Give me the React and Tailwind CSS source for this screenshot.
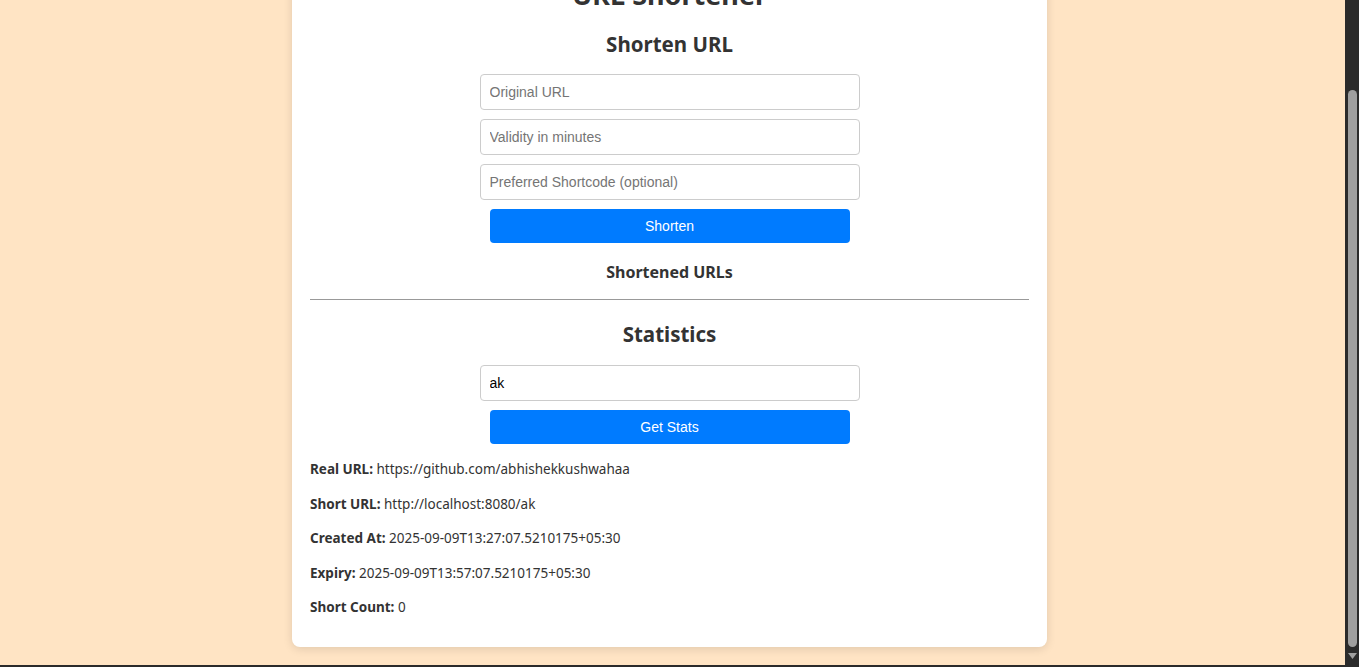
import { useState } from "react";

const stats = [
  { label: "Real URL:", value: "https://github.com/abhishekkushwahaa" },
  { label: "Short URL:", value: "http://localhost:8080/ak" },
  { label: "Created At:", value: "2025-09-09T13:27:07.5210175+05:30" },
  { label: "Expiry:", value: "2025-09-09T13:57:07.5210175+05:30" },
  { label: "Short Count:", value: "0" },
];

const inputCls =
  "w-[380px] h-[36px] px-[9px] border border-[#cccccc] rounded-[4px] bg-white text-[14px] text-black placeholder:text-[#757575] outline-none font-['Liberation_Sans',Arial,sans-serif]";

const btnCls =
  "w-[360px] h-[34px] rounded-[4px] bg-[#007bff] text-white text-[14px] font-['Liberation_Sans',Arial,sans-serif]";

export default function App() {
  const [form, setForm] = useState({ url: "", validity: "", code: "" });
  const [code, setCode] = useState("ak");

  return (
    <div className="h-[667px] flex flex-col overflow-hidden bg-[#ffe4c4] font-['Noto_Sans','Open_Sans',sans-serif] text-[#333333]">
      <div className="flex flex-1 min-h-0">
        {/* page */}
        <div className="flex-1 overflow-hidden pl-[292px]">
          <div className="w-[755px] -mt-[43px] bg-white rounded-[8px] shadow-[0_2px_10px_rgba(0,0,0,0.12)] px-[18px] pt-[20px] pb-[31px]">
            <h1 className="text-center text-[27px] leading-[36px] font-bold">URL Shortener</h1>

            <h2 className="mt-[16px] text-center text-[20.5px] leading-[30px] font-bold">Shorten URL</h2>
            <div className="mt-[15px] flex flex-col items-center gap-[9px]">
              <input
                className={inputCls}
                placeholder="Original URL"
                value={form.url}
                onChange={(e) => setForm({ ...form, url: e.target.value })}
              />
              <input
                className={inputCls}
                placeholder="Validity in minutes"
                value={form.validity}
                onChange={(e) => setForm({ ...form, validity: e.target.value })}
              />
              <input
                className={inputCls}
                placeholder="Preferred Shortcode (optional)"
                value={form.code}
                onChange={(e) => setForm({ ...form, code: e.target.value })}
              />
              <button className={btnCls}>Shorten</button>
            </div>

            <h3 className="mt-[18px] text-center text-[16px] leading-[22px] font-bold">Shortened URLs</h3>
            <hr className="mt-[16px] border-0 border-t border-[#999999]" />

            <h2 className="mt-[19px] text-center text-[20.5px] leading-[30px] font-bold">Statistics</h2>
            <div className="mt-[16px] flex flex-col items-center gap-[9px]">
              <input className={inputCls} value={code} onChange={(e) => setCode(e.target.value)} />
              <button className={btnCls}>Get Stats</button>
            </div>

            <div className="mt-[16px] flex flex-col gap-[16.5px] text-[13.5px] leading-[18px]">
              {stats.map((s) => (
                <p key={s.label}>
                  <strong className="font-bold">{s.label}</strong> {s.value}
                </p>
              ))}
            </div>
          </div>
        </div>

        {/* scrollbar */}
        <div className="w-[14px] bg-[#2b2b2b] flex flex-col items-center">
          <div className="h-[90px]" />
          <div className="w-[9px] flex-1 rounded-full bg-[#9f9f9f]" />
          <div className="h-[18px] flex items-center justify-center">
            <svg width="9" height="6" viewBox="0 0 9 6">
              <path d="M0 0H9L4.5 6Z" fill="#9f9f9f" />
            </svg>
          </div>
        </div>
      </div>
      <div className="h-[2px] bg-[#2b2b2b]" />
    </div>
  );
}
